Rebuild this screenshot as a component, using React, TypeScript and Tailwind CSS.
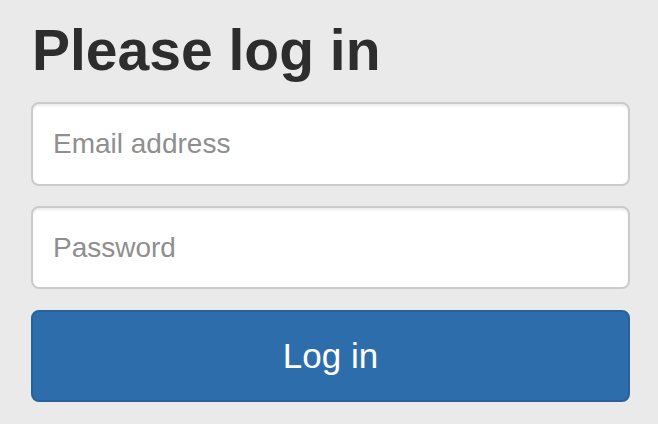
export default function App() {
  return (
    <div className="min-h-[424px] w-full bg-[#eaeaea] font-['Liberation_Sans',Arial,sans-serif]">
      <form className="ml-[31px] w-[599px] pt-[22px]" onSubmit={(e) => e.preventDefault()}>
        <h1 className="mb-[23px] pl-[1px] text-[57px] leading-[57px] font-bold text-[#2d2d2d]">Please log in</h1>

        <input
          type="email"
          placeholder="Email address"
          className="block h-[84px] w-full rounded-[8px] border-2 border-[#cbcbcb] bg-white px-[20px] text-[28px] text-[#333] shadow-[inset_0_2px_2px_rgba(0,0,0,0.075)] outline-none placeholder:text-[#8f8f8f]"
        />
        <input
          type="password"
          placeholder="Password"
          className="mt-[20px] block h-[83px] w-full rounded-[8px] border-2 border-[#cbcbcb] bg-white px-[20px] text-[28px] text-[#333] shadow-[inset_0_2px_2px_rgba(0,0,0,0.075)] outline-none placeholder:text-[#8f8f8f]"
        />

        <button
          type="submit"
          className="mt-[21px] block h-[92px] w-full rounded-[8px] border-2 border-[#2a609a] bg-[#2d6dab] text-[35px] text-white"
        >
          Log in
        </button>
      </form>
    </div>
  );
}
